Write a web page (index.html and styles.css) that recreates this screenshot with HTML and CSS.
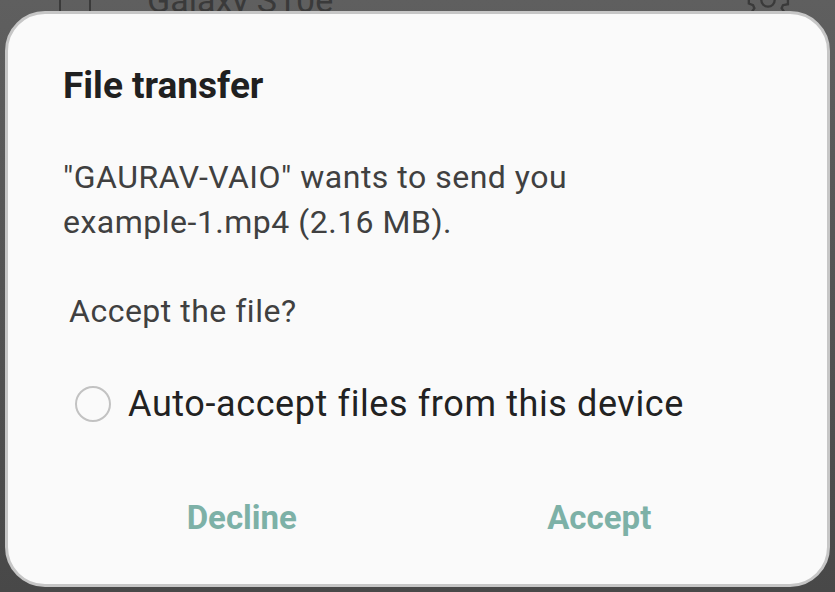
FILE: index.html
```html
<!DOCTYPE html>
<html lang="en">
<head>
    <meta charset="UTF-8">
    <meta name="viewport" content="width=device-width, initial-scale=1.0">
    <title>File transfer</title>
    <link rel="stylesheet" href="styles.css">
</head>
<body>
    <div class="screen">
        <!-- list row behind the dialog -->
        <div class="behind">
            <span class="check"></span>
            <span class="device-name">Galaxy S10e</span>
            <svg class="gear" width="46" height="46" viewBox="0 0 24 24">
                <path d="M12 8.5a3.5 3.5 0 1 0 0 7a3.5 3.5 0 1 0 0-7z M10.2 2h3.6l.5 2.6 1.6.7 2.2-1.5 2.5 2.5-1.5 2.2.7 1.6 2.6.5v3.6l-2.6.5-.7 1.6 1.5 2.2-2.5 2.5-2.2-1.5-1.6.7-.5 2.6h-3.6l-.5-2.6-1.6-.7-2.2 1.5-2.5-2.5 1.5-2.2-.7-1.6L2 13.8v-3.6l2.6-.5.7-1.6-1.5-2.2 2.5-2.5 2.2 1.5 1.6-.7z" fill="none" stroke="#3a3a3a" stroke-width="1.2"/>
            </svg>
        </div>

        <div class="dialog">
            <h1 class="title">File transfer</h1>
            <p class="message">"GAURAV-VAIO" wants to send you<br>example-1.mp4 (2.16 MB).</p>
            <p class="question">Accept the file?</p>
            <label class="option">
                <span class="radio"></span>
                <span>Auto-accept files from this device</span>
            </label>
            <div class="actions">
                <button class="btn">Decline</button>
                <button class="btn">Accept</button>
            </div>
        </div>
    </div>
</body>
</html>
```

FILE: styles.css
```css
body {
    margin: 0;
    padding: 0;
    font-family: Roboto, "Noto Sans", sans-serif;
    background: #555;
}

.screen {
    position: relative;
    width: 835px;
    height: 592px;
    overflow: hidden;
    background: linear-gradient(#5f5f5f, #484848);
    padding: 11px 5px 0 5px;
    box-sizing: border-box;
}

.behind {
    position: absolute;
    top: -23px;
    left: 0;
    right: 0;
    height: 46px;
    display: flex;
    align-items: center;
    color: #3a3a3a;
}

.check {
    width: 28px;
    height: 28px;
    border: 2px solid #3a3a3a;
    border-radius: 3px;
    margin-left: 59px;
}

.device-name {
    margin-left: 56px;
    font-size: 34px;
}

.gear {
    margin-left: auto;
    margin-right: 44px;
}

.dialog {
    position: relative;
    height: 576px;
    box-sizing: border-box;
    background: #fafafa;
    border: 3px solid #c6c6c6;
    border-radius: 40px;
    padding: 0 49px 0 55px;
}

.title {
    margin: 52px 0 0;
    font-size: 37px;
    font-weight: bold;
    line-height: 40px;
    color: #202020;
}

.message {
    margin: 49px 0 0;
    font-size: 32px;
    letter-spacing: 0.5px;
    line-height: 45px;
    color: #404040;
}

.question {
    margin: 44px 0 0 6px;
    font-size: 32px;
    letter-spacing: 0.5px;
    line-height: 45px;
    color: #404040;
}

.option {
    display: flex;
    align-items: center;
    margin: 48px 0 0 12px;
    font-size: 36px;
    letter-spacing: 0.6px;
    line-height: 44px;
    color: #222;
}

.radio {
    width: 32px;
    height: 32px;
    border: 2.5px solid #c2c2c2;
    border-radius: 50%;
    margin-right: 17px;
}

.actions {
    display: flex;
    margin-top: 64px;
}

.btn {
    flex: 1;
    background: none;
    border: none;
    font-family: inherit;
    font-size: 33px;
    font-weight: bold;
    line-height: 40px;
    color: #7db1a7;
    padding: 8px 0;
}
```
